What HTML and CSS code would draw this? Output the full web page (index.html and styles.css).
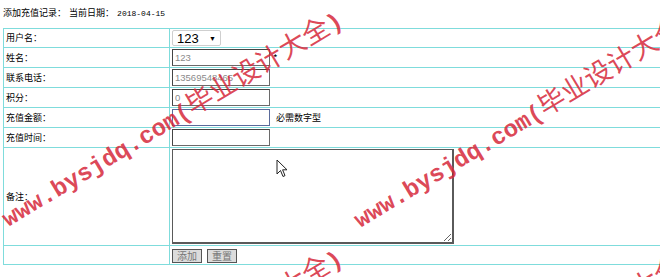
FILE: index.html
```html
<!DOCTYPE html>
<html lang="zh-CN">
<head>
    <meta charset="UTF-8">
    <title>添加充值记录</title>
    <link rel="stylesheet" href="styles.css">
</head>
<body>
    <div class="page">
        <div class="title">
            <span>添加充值记录：</span>
            <span class="date-label">当前日期：</span>
            <span class="date">2018-04-15</span>
        </div>

        <table class="form-table">
            <tr class="first">
                <td class="label">用户名：</td>
                <td>
                    <div class="select">123 <span class="arrow">&#9660;</span></div>
                </td>
            </tr>
            <tr>
                <td class="label">姓名：</td>
                <td><input class="field" type="text" value="123" readonly><span class="star">*</span></td>
            </tr>
            <tr>
                <td class="label">联系电话：</td>
                <td><input class="field" type="text" value="13569548465" readonly></td>
            </tr>
            <tr>
                <td class="label">积分：</td>
                <td><input class="field" type="text" value="0" readonly></td>
            </tr>
            <tr>
                <td class="label">充值金额：</td>
                <td><input class="field focus" type="text"><span class="hint">必需数字型</span></td>
            </tr>
            <tr>
                <td class="label">充值时间：</td>
                <td><input class="field" type="text"></td>
            </tr>
            <tr class="tall">
                <td class="label">备注：</td>
                <td><textarea class="memo"></textarea></td>
            </tr>
            <tr class="last">
                <td class="label"></td>
                <td>
                    <button class="btn">添加</button>
                    <button class="btn">重置</button>
                </td>
            </tr>
        </table>

        <!-- 水印 -->
        <div class="watermarks">
            <span class="wm wm1">www.bysjdq.com(<span class="cn">毕业设计大全</span>)</span>
            <span class="wm wm2">www.bysjdq.com(<span class="cn">毕业设计大全</span>)</span>
            <span class="wm wm3">www.bysjdq.com(<span class="cn">毕业设计大全</span>)</span>
            <span class="wm wm4">www.bysjdq.com(<span class="cn">毕业设计大全</span>)</span>
        </div>

        <svg class="cursor" width="12" height="19" viewBox="0 0 12 19">
            <path d="M1 1 L1 15 L4.5 11.5 L7 17.5 L9 16.6 L6.6 10.8 L11 10.8 Z" fill="#fff" stroke="#222" stroke-width="1"/>
        </svg>
    </div>
</body>
</html>
```

FILE: styles.css
```css
html, body {
    margin: 0;
    padding: 0;
    background: #fff;
    overflow: hidden;
}
body {
    font-family: "Noto Sans CJK SC", "Liberation Sans", sans-serif;
    font-size: 9px;
    color: #000;
}
.page {
    position: relative;
    width: 660px;
    height: 277px;
    padding: 6px 3px 0 3px;
    box-sizing: border-box;
    overflow: hidden;
}
.title {
    height: 22px;
    line-height: 14px;
    font-size: 9px;
}
.date-label {
    margin-left: 1px;
}
.date {
    margin-left: 1px;
    font-family: "Liberation Mono", monospace;
    font-size: 8px;
}
.form-table {
    border-collapse: collapse;
    width: 760px;
    table-layout: fixed;
}
.form-table td {
    border: 1px solid #7fdcdc;
    height: 19px;
    padding: 0 2px;
    vertical-align: middle;
    white-space: nowrap;
}
.form-table tr.first td {
    height: 18px;
}
.form-table tr.last td {
    height: 18px;
}
.form-table td.label {
    width: 161px;
    font-size: 9px;
    line-height: 12px;
}
.form-table tr.tall td {
    height: 97px;
}
.select {
    display: inline-flex;
    align-items: center;
    justify-content: space-between;
    box-sizing: border-box;
    width: 49px;
    height: 16px;
    padding: 0 4px 0 4px;
    border: 1px solid #cfcfcf;
    border-radius: 2px;
    font-family: "Liberation Sans", sans-serif;
    font-size: 13px;
    vertical-align: middle;
}
.arrow {
    font-size: 7px;
}
.field {
    box-sizing: border-box;
    width: 98px;
    height: 17px;
    margin: 0;
    padding: 0 2px;
    border: 1px solid #6a6a6a;
    border-top-color: #444;
    border-left-color: #444;
    font-family: "Liberation Sans", sans-serif;
    font-size: 9.5px;
    color: #8a8a8a;
    vertical-align: middle;
    outline: none;
}
.field.focus {
    border-color: #5a6a9a;
}
.star {
    margin-left: 3px;
    font-size: 10px;
    vertical-align: middle;
}
.hint {
    margin-left: 6px;
    font-size: 9px;
    vertical-align: middle;
}
.memo {
    box-sizing: border-box;
    display: block;
    width: 282px;
    height: 95px;
    margin: 0;
    border: 1px solid #5a5a5a;
    border-width: 1px 2px 2px 1px;
    resize: both;
}
.btn {
    box-sizing: border-box;
    width: 30px;
    height: 14px;
    margin: 1px 1px 0 0;
    padding: 0;
    border: 1px solid #555;
    background: #dcdcdc;
    color: #777;
    font-family: "Noto Sans CJK SC", sans-serif;
    font-size: 10px;
    line-height: 12px;
    vertical-align: middle;
}
.btn + .btn {
    margin-left: 2px;
}
.watermarks {
    position: absolute;
    left: 0;
    top: 0;
    width: 660px;
    height: 277px;
    pointer-events: none;
}
.wm {
    position: absolute;
    transform: rotate(-31deg);
    transform-origin: 0 100%;
    font-family: "Liberation Mono", monospace;
    font-weight: bold;
    font-size: 24px;
    line-height: 28px;
    color: rgba(214, 40, 58, 0.85);
    white-space: nowrap;
}
.wm .cn {
    font-family: "Noto Sans CJK SC", sans-serif;
    font-size: 27px;
    font-weight: normal;
}
.wm1 { left: 12px; top: 201px; }
.wm2 { left: 364px; top: 202px; }
.wm3 { left: 12px; top: 439px; }
.wm4 { left: 364px; top: 440px; }
.cursor {
    position: absolute;
    left: 276px;
    top: 159px;
}
```
